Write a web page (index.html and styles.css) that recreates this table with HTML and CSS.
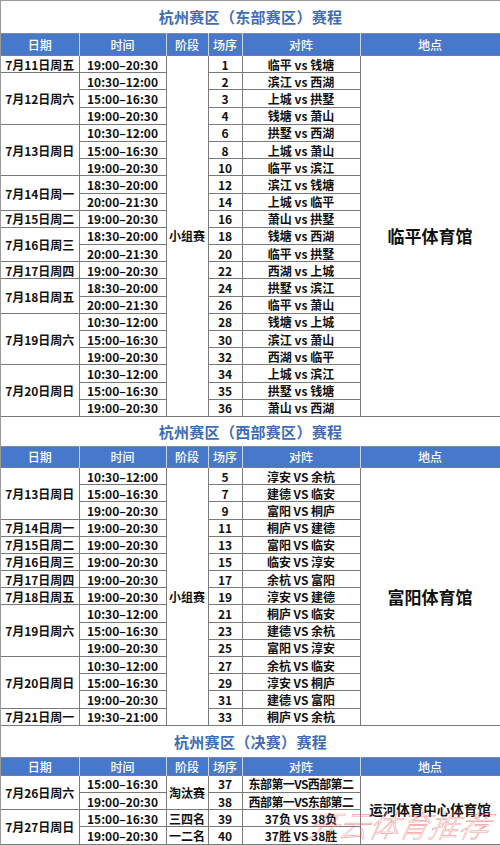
FILE: index.html
```html
<!DOCTYPE html>
<html lang="zh">
<head>
<meta charset="utf-8">
<link rel="stylesheet" href="styles.css">
</head>
<body>
<div class="page">
  <section class="sec sec1">
    <h2 class="title">杭州赛区（东部赛区）赛程</h2>
    <table class="grid">
      <colgroup><col class="c-date"><col class="c-time"><col class="c-stage"><col class="c-no"><col class="c-match"><col class="c-venue"></colgroup>
      <thead><tr><th>日期</th><th>时间</th><th>阶段</th><th>场序</th><th>对阵</th><th>地点</th></tr></thead>
      <tbody>
        <tr><td>7月11日周五</td><td>19:00–20:30</td><td rowspan="21">小组赛</td><td>1</td><td>临平 vs 钱塘</td><td rowspan="21" class="venue">临平体育馆</td></tr>
        <tr><td rowspan="3">7月12日周六</td><td>10:30–12:00</td><td>2</td><td>滨江 vs 西湖</td></tr>
        <tr><td>15:00–16:30</td><td>3</td><td>上城 vs 拱墅</td></tr>
        <tr><td>19:00–20:30</td><td>4</td><td>钱塘 vs 萧山</td></tr>
        <tr><td rowspan="3">7月13日周日</td><td>10:30–12:00</td><td>6</td><td>拱墅 vs 西湖</td></tr>
        <tr><td>15:00–16:30</td><td>8</td><td>上城 vs 萧山</td></tr>
        <tr><td>19:00–20:30</td><td>10</td><td>临平 vs 滨江</td></tr>
        <tr><td rowspan="2">7月14日周一</td><td>18:30–20:00</td><td>12</td><td>滨江 vs 钱塘</td></tr>
        <tr><td>20:00–21:30</td><td>14</td><td>上城 vs 临平</td></tr>
        <tr><td>7月15日周二</td><td>19:00–20:30</td><td>16</td><td>萧山 vs 拱墅</td></tr>
        <tr><td rowspan="2">7月16日周三</td><td>18:30–20:00</td><td>18</td><td>钱塘 vs 西湖</td></tr>
        <tr><td>20:00–21:30</td><td>20</td><td>临平 vs 拱墅</td></tr>
        <tr><td>7月17日周四</td><td>19:00–20:30</td><td>22</td><td>西湖 vs 上城</td></tr>
        <tr><td rowspan="2">7月18日周五</td><td>18:30–20:00</td><td>24</td><td>拱墅 vs 滨江</td></tr>
        <tr><td>20:00–21:30</td><td>26</td><td>临平 vs 萧山</td></tr>
        <tr><td rowspan="3">7月19日周六</td><td>10:30–12:00</td><td>28</td><td>钱塘 vs 上城</td></tr>
        <tr><td>15:00–16:30</td><td>30</td><td>滨江 vs 萧山</td></tr>
        <tr><td>19:00–20:30</td><td>32</td><td>西湖 vs 临平</td></tr>
        <tr><td rowspan="3">7月20日周日</td><td>10:30–12:00</td><td>34</td><td>上城 vs 滨江</td></tr>
        <tr><td>15:00–16:30</td><td>35</td><td>拱墅 vs 钱塘</td></tr>
        <tr><td>19:00–20:30</td><td>36</td><td>萧山 vs 西湖</td></tr>
      </tbody>
    </table>
  </section>

  <section class="sec sec2">
    <h2 class="title">杭州赛区（西部赛区）赛程</h2>
    <table class="grid">
      <colgroup><col class="c-date"><col class="c-time"><col class="c-stage"><col class="c-no"><col class="c-match"><col class="c-venue"></colgroup>
      <thead><tr><th>日期</th><th>时间</th><th>阶段</th><th>场序</th><th>对阵</th><th>地点</th></tr></thead>
      <tbody>
        <tr><td rowspan="3">7月13日周日</td><td>10:30–12:00</td><td rowspan="15">小组赛</td><td>5</td><td>淳安 VS 余杭</td><td rowspan="15" class="venue">富阳体育馆</td></tr>
        <tr><td>15:00–16:30</td><td>7</td><td>建德 VS 临安</td></tr>
        <tr><td>19:00–20:30</td><td>9</td><td>富阳 VS 桐庐</td></tr>
        <tr><td>7月14日周一</td><td>19:00–20:30</td><td>11</td><td>桐庐 VS 建德</td></tr>
        <tr><td>7月15日周二</td><td>19:00–20:30</td><td>13</td><td>富阳 VS 临安</td></tr>
        <tr><td>7月16日周三</td><td>19:00–20:30</td><td>15</td><td>临安 VS 淳安</td></tr>
        <tr><td>7月17日周四</td><td>19:00–20:30</td><td>17</td><td>余杭 VS 富阳</td></tr>
        <tr><td>7月18日周五</td><td>19:00–20:30</td><td>19</td><td>淳安 VS 建德</td></tr>
        <tr><td rowspan="3">7月19日周六</td><td>10:30–12:00</td><td>21</td><td>桐庐 VS 临安</td></tr>
        <tr><td>15:00–16:30</td><td>23</td><td>建德 VS 余杭</td></tr>
        <tr><td>19:00–20:30</td><td>25</td><td>富阳 VS 淳安</td></tr>
        <tr><td rowspan="3">7月20日周日</td><td>10:30–12:00</td><td>27</td><td>余杭 VS 临安</td></tr>
        <tr><td>15:00–16:30</td><td>29</td><td>淳安 VS 桐庐</td></tr>
        <tr><td>19:00–20:30</td><td>31</td><td>建德 VS 富阳</td></tr>
        <tr><td>7月21日周一</td><td>19:30–21:00</td><td>33</td><td>桐庐 VS 余杭</td></tr>
      </tbody>
    </table>
  </section>

  <section class="sec sec3">
    <h2 class="title">杭州赛区（决赛）赛程</h2>
    <table class="grid">
      <colgroup><col class="c-date"><col class="c-time"><col class="c-stage"><col class="c-no"><col class="c-match"><col class="c-venue"></colgroup>
      <thead><tr><th>日期</th><th>时间</th><th>阶段</th><th>场序</th><th>对阵</th><th>地点</th></tr></thead>
      <tbody>
        <tr><td rowspan="2">7月26日周六</td><td>15:00–16:30</td><td rowspan="2">淘汰赛</td><td>37</td><td class="tight">东部第一VS西部第二</td><td rowspan="4" class="venue venue-sm">运河体育中心体育馆</td></tr>
        <tr><td>19:00–20:30</td><td>38</td><td class="tight">西部第一VS东部第二</td></tr>
        <tr><td rowspan="2">7月27日周日</td><td>15:00–16:30</td><td>三四名</td><td>39</td><td>37负 VS 38负</td></tr>
        <tr><td>19:00–20:30</td><td>一二名</td><td>40</td><td>37胜 VS 38胜</td></tr>
      </tbody>
    </table>
  </section>
  <div class="watermark">开云体育推荐</div>
</div>
</body>
</html>
```

FILE: styles.css
```css
html, body {
  margin: 0;
  padding: 0;
  background: #ffffff;
}

.page {
  position: relative;
  width: 500px;
  height: 845px;
  overflow: hidden;
  box-sizing: border-box;
  border-top: 1px solid #9a9a9a;
  border-left: 1px solid #9a9a9a;
  font-family: "Noto Sans CJK SC", "Noto Sans", sans-serif;
  color: #111;
}

.title {
  margin: 0;
  text-align: center;
  font-size: 15px;
  font-weight: 700;
  color: #3f6db5;
  letter-spacing: 0.3px;
}

.sec1 .title { height: 32px; line-height: 32px; }
.sec2 .title { height: 29px; line-height: 29px; }
.sec3 .title { height: 31px; line-height: 31px; }

.grid {
  width: 499px;
  table-layout: fixed;
  border-collapse: collapse;
  font-size: 12px;
}

.c-date { width: 78px; }
.c-time { width: 87px; }
.c-stage { width: 42px; }
.c-no { width: 34px; }
.c-match { width: 118px; }
.c-venue { width: 140px; }

.grid th {
  background: #4678cc;
  color: #ffffff;
  font-weight: 500;
  font-size: 12px;
  height: 20px;
  padding: 0;
  border-left: 1px solid #c9d6ee;
  border-right: 1px solid #c9d6ee;
  border-top: 1px solid #7d8aa0;
  line-height: 20px;
}

.grid th:first-child { border-left: none; }

.sec1 .grid th { height: 21px; }
.sec3 .grid th { height: 17px; line-height: 17px; }

.grid td {
  border: 1px solid #7a7a7a;
  text-align: center;
  vertical-align: middle;
  padding: 0;
  height: 16.2px;
  line-height: 15px;
  font-weight: 700;
  white-space: nowrap;
  overflow: hidden;
}

.grid tr td:first-child { border-left: none; }

.grid td.venue {
  font-size: 17px;
  font-weight: 700;
}

.grid td.venue-sm {
  font-size: 13.5px;
}

.grid td.tight {
  letter-spacing: -0.6px;
  font-size: 12px;
}

.watermark {
  position: absolute;
  right: 10px;
  bottom: 4px;
  font-size: 30px;
  line-height: 34px;
  font-style: italic;
  font-weight: 300;
  color: transparent;
  -webkit-text-stroke: 0.6px rgba(228, 90, 90, 0.6);
  transform: skewX(-12deg);
  pointer-events: none;
}
```
